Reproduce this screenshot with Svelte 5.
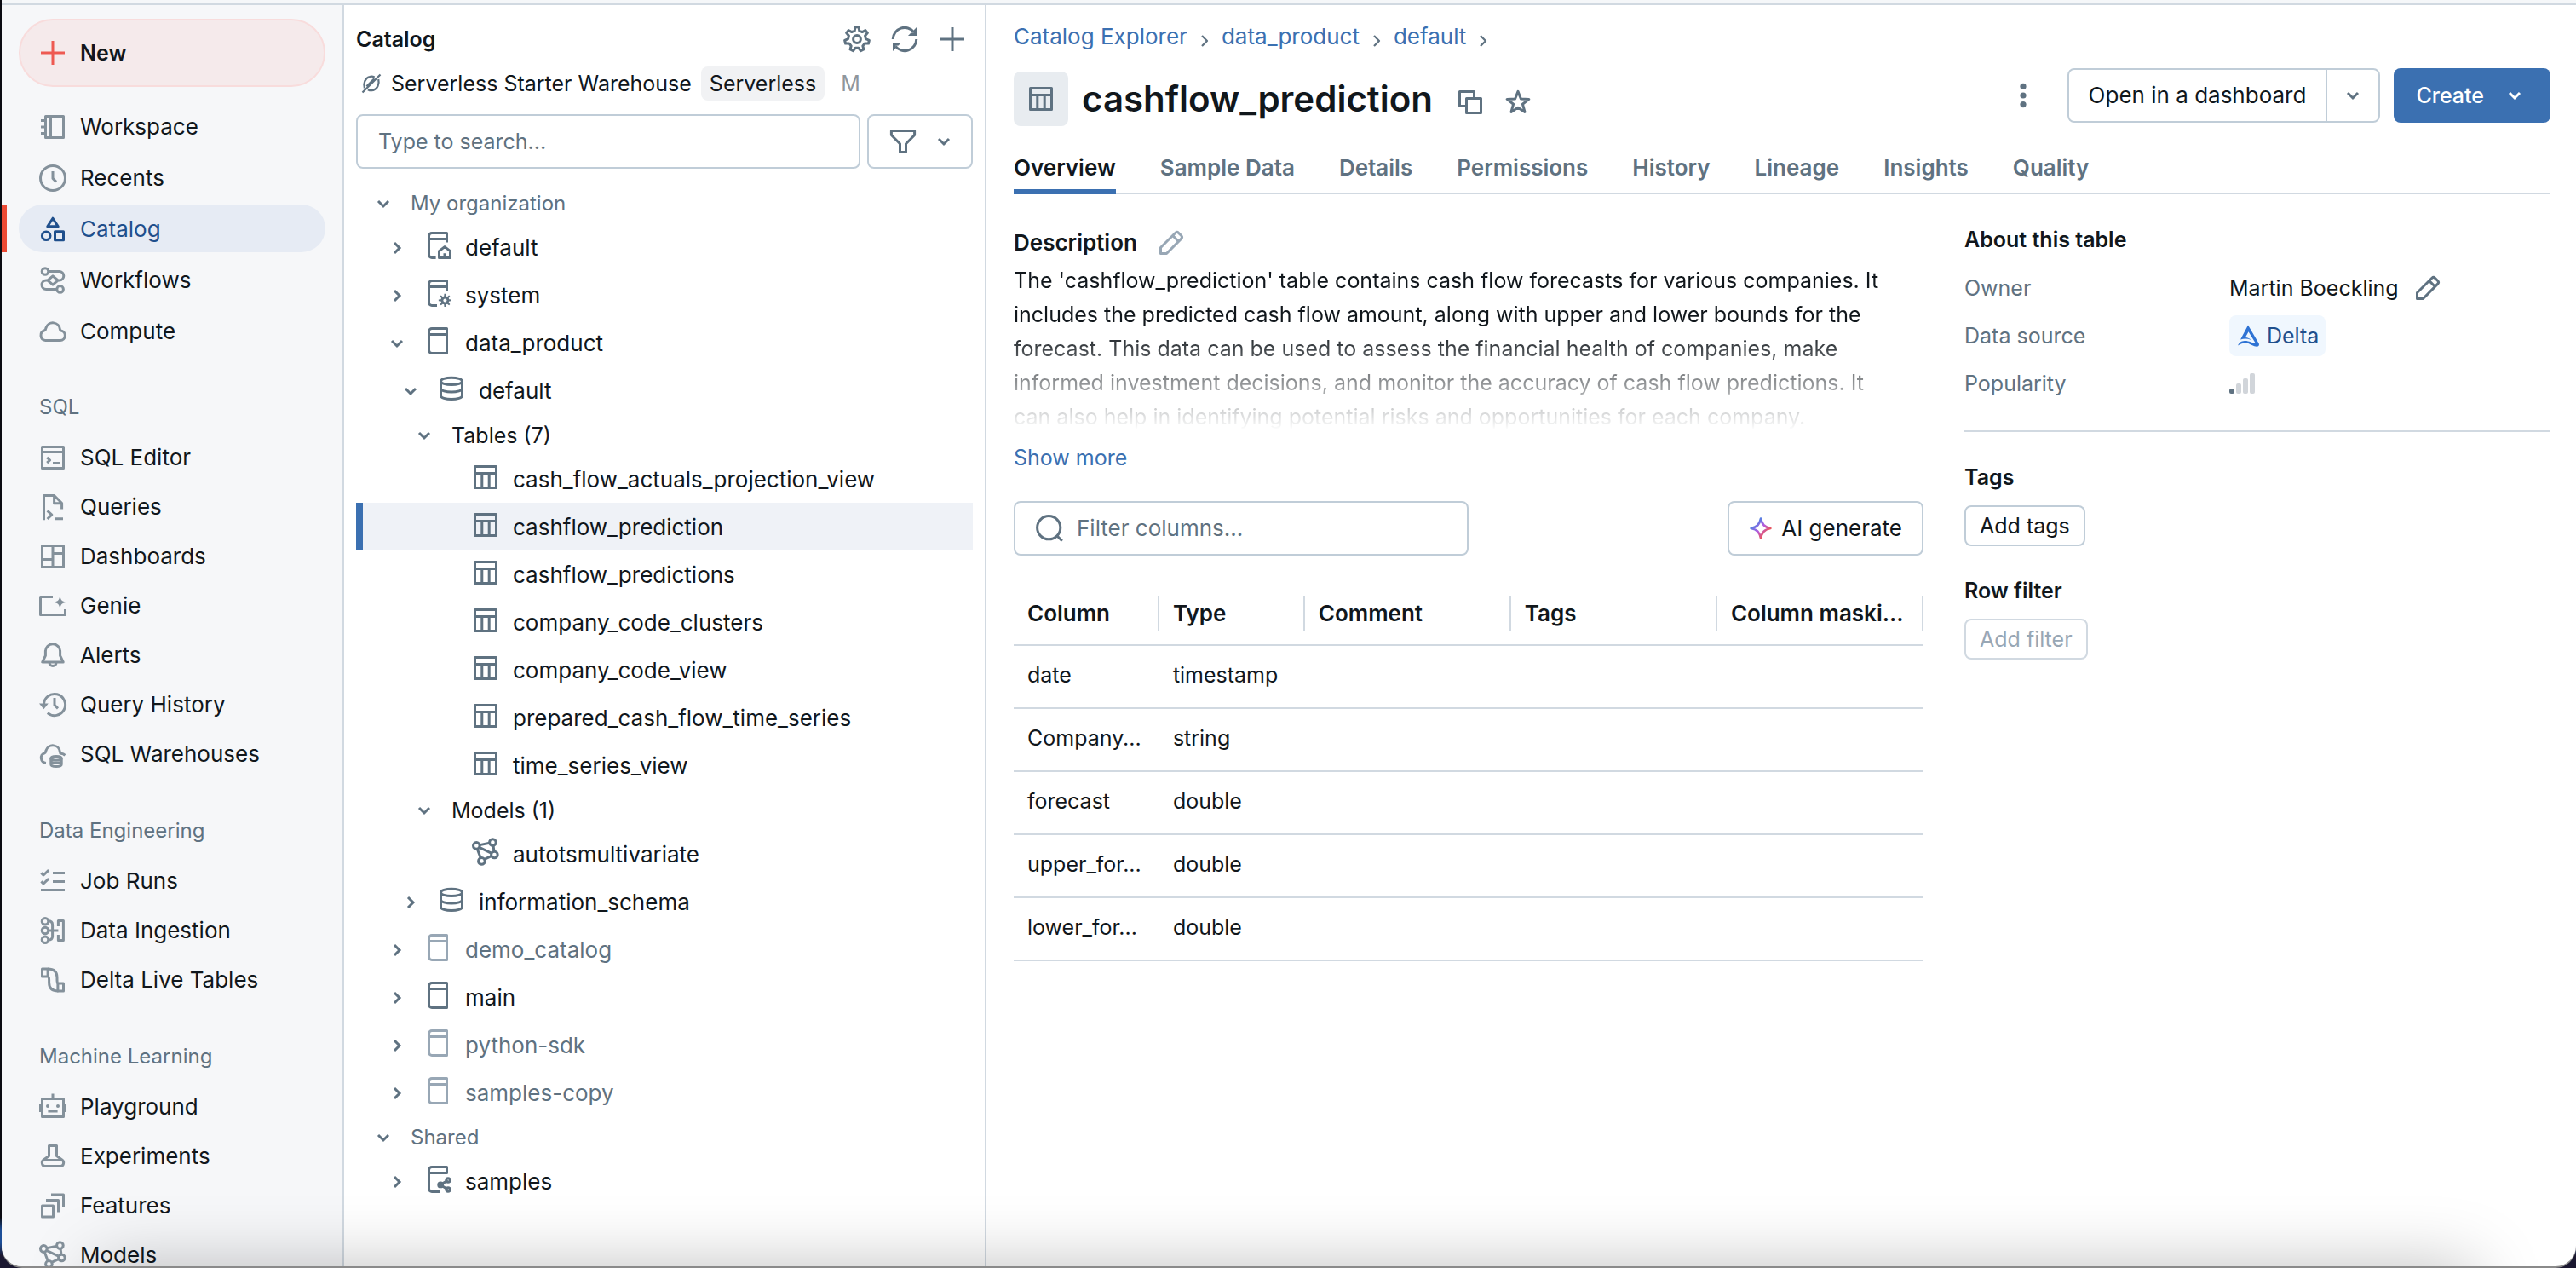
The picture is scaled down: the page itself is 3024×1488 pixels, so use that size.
<script>
  const gearPath = (cx, cy, teeth, outer, inner) => {
    const points = [];
    const step = (Math.PI * 2) / teeth;
    for (let i = 0; i < teeth; i++) {
      const a = i * step - Math.PI / 2;
      for (const [offset, r] of [[-0.3, inner], [-0.15, outer], [0.15, outer], [0.3, inner]]) {
        const t = a + offset * step;
        points.push(`${(cx + r * Math.cos(t)).toFixed(2)} ${(cy + r * Math.sin(t)).toFixed(2)}`);
      }
    }
    return `M${points.join('L')}z`;
  };

  const icons = {
    plus: '<path d="M8 1v14M1 8h14"/>',
    notebook: '<rect x="3.75" y="1.75" width="10.5" height="12.5"/><path d="M6.75 1.75v12.5M1 4.25h2.5M1 8h2.5M1 11.75h2.5"/>',
    clock: '<circle cx="8" cy="8" r="7.25"/><path d="M8 4v4.2l2 2"/>',
    catalog: '<path d="M8 1.6L11.1 6.4H4.9z"/><circle cx="4.1" cy="11.9" r="2.4"/><rect x="9.25" y="9.4" width="5" height="5"/>',
    workflow: '<circle cx="3.5" cy="2.75" r="1.9"/><circle cx="12.3" cy="13.2" r="1.9"/><path d="M5.4 2.75h6.4a2.6 2.6 0 0 1 0 5.2h-1M10.4 13.2H4.1a2.6 2.6 0 0 1 0-5.2h1M8 5.4l3 2.6-3 2.6L5 8z"/>',
    cloud: '<path d="M3.7 13.25h8.7a2.9 2.9 0 0 0 .4-5.75.8.8 0 0 1-.6-.8A4.2 4.2 0 0 0 4 5.9c-.1.7-.3 1.2-.9 1.5a3 3 0 0 0 .6 5.85z"/>',
    editor: '<rect x="1.75" y="1.75" width="12.5" height="12.5"/><path d="M1.75 4.75h12.5M4.6 7.9l1.7 1.6-1.7 1.6M8 11.25h4"/>',
    query: '<path d="M2.75 15.6V1.25H8.8l4.5 4.5v3.5M8.8 1.25v4.6h4.5M4.8 10.2l2.6 2.4-2.6 2.4M9 14.85h5"/>',
    dashboard: '<rect x="1.75" y="1.75" width="12.5" height="12.5"/><path d="M8 1.75v12.5M1.75 9.75H8M8 6.25h6.25"/>',
    genie: '<path d="M8 2.75H.75v10.5h14.5V10"/><path class="solid" d="M12.2 2c.5 2.6 1 3.3 3.8 3.9-2.8.6-3.3 1.2-3.8 3.8-.5-2.6-1-3.2-3.8-3.8 2.8-.6 3.3-1.3 3.8-3.9z"/>',
    bell: '<path d="M8 1.4a4.3 4.3 0 0 0-4.3 4.3v2.5L1.9 12h12.2l-1.8-3.8V5.7A4.3 4.3 0 0 0 8 1.4zM6 12.2a2 2 0 0 0 4 0"/>',
    history: '<path d="M2.7 8A6.3 6.3 0 1 1 4.9 12.8M9 4v4.2l2 2"/><path class="solid" d="M0 7.3h5.4L2.7 10.6z"/>',
    warehouse: '<path d="M4 13.2a3 3 0 0 1-.9-5.8c.6-.3.8-.8.9-1.5a4.2 4.2 0 0 1 8.2.8c0 .5.3.8.7.9 1 .1 1.7.5 2.3 1.1"/><ellipse cx="10" cy="10.4" rx="3.1" ry="1.2"/><path d="M6.9 10.4v3.6c0 .8 1.4 1.3 3.1 1.3s3.1-.5 3.1-1.3v-3.6M6.9 12.4c.6.6 1.8.9 3.1.9s2.5-.3 3.1-.9"/>',
    jobs: '<path d="M1.2 3.2l1.3 1.3L5.6 1.6M1.2 8.2l1.3 1.3 3.1-2.9M8 3.25h7M8 8.25h7M1 13.25h14"/>',
    ingestion: '<circle cx="3.5" cy="2.6" r="1.9"/><circle cx="3.5" cy="8" r="1.9"/><circle cx="3.5" cy="13.4" r="1.9"/><path d="M5.2 2.4c1.7 0 2.6.7 2.6 2.2v6.8c0 1.5-.9 2.2-2.6 2.2M5.4 8h5.8M11.2 5.5V2.25h3v11.5h-3V10.5"/>',
    pipeline: '<rect x="1.75" y="1.5" width="3.3" height="4.5"/><rect x="10.95" y="10" width="3.3" height="4.5"/><path d="M5 1.5c4 0 5.5 2 5.5 5v1.5c0 1.5.2 2 .8 2M5 6c.6 0 .8.6.8 2v1.5c0 3 1.7 5 5.4 5"/>',
    robot: '<path d="M8 .2v3M.75 6v5M15.25 6v5"/><rect x="1.75" y="3.25" width="12.5" height="10.5"/><path d="M5.2 10.5h5.6"/><circle class="solid" cx="5" cy="7.5" r="1"/><circle class="solid" cx="11" cy="7.5" r="1"/>',
    beaker: '<path d="M5.75 1.75h4.5v6l3.3 2.4c1.4 1.1.8 3.6-.9 3.6h-9.3c-1.7 0-2.3-2.5-.9-3.6l3.3-2.4zM3 10.2h10"/>',
    features: '<rect x="1.75" y="8" width="6.5" height="6.5"/><path d="M4 4.75h7.25v7M7 1.5h7.25V8.5"/>',
    model: '<circle cx="2.65" cy="4.2" r="1.9"/><circle cx="12.2" cy="2.3" r="1.9"/><circle cx="13.2" cy="9.5" r="1.9"/><circle cx="5.7" cy="13.2" r="1.9"/><path d="M4.5 3.8l5.9-1.2M4.3 5.2l7.3 3.5M3.1 6l2 5.4M12.5 4.2l.5 3.4M7.3 12.2l4.3-2"/>',
    gear: `<path d="${gearPath(8, 8, 7, 7.2, 5.2)}"/><circle cx="8" cy="8" r="2.2"/>`,
    refresh: '<path d="M1.1 8a6.9 6.9 0 0 1 12.3-4.2M14.9 8a6.9 6.9 0 0 1-12.3 4.2"/><path class="solid" d="M15 1v5h-5l1.7-1.7 1.6-.2.2-1.6zM1 15v-5h5l-1.7 1.7-1.6.2-.2 1.6z"/>',
    disconnected: '<path d="M2.6 11.6C1.5 8 3 3.6 6.6 2.7c1.4-.4 2.7-.2 3.9.3M13.5 4.6c.9 3.6-.7 7.6-4 8.6-1.5.5-3 .3-4.2-.4M15 1L1 15M10.2 4.2l-6 6"/>',
    funnel: '<path d="M1.2 1.75h13.6v2.5L9.75 9.4v4.85h-3.5V9.4L1.2 4.25z"/>',
    down: '<path d="M4 6l4 4 4-4"/>',
    right: '<path d="M6 4l4 4-4 4"/>',
    book: '<path d="M13.25.75H4.5a1.75 1.75 0 0 0-1.75 1.75v11c0 1 .75 1.75 1.75 1.75h8.75zM3 4.25h10.25"/>',
    bookHome: '<path d="M6.8 15.25H4.5a1.75 1.75 0 0 1-1.75-1.75v-11A1.75 1.75 0 0 1 4.5.75h8.75V6.2M3 4.25h10.25M8.75 15.2v-3.9l3.25-2.5 3.25 2.5v3.9zM12 15v-2.4"/>',
    bookGear: `<path d="M7.5 15.25h-3a1.75 1.75 0 0 1-1.75-1.75v-11A1.75 1.75 0 0 1 4.5.75h8.75V7M3 4.25h10.25"/><path class="solid" d="${gearPath(12.2, 12.2, 8, 3.8, 2.5)}"/><circle class="hole" cx="12.2" cy="12.2" r="1"/>`,
    bookShare: '<path d="M9 15.25H4.5a1.75 1.75 0 0 1-1.75-1.75v-11A1.75 1.75 0 0 1 4.5.75h8.75v3.5H3M13.8 8.6l-4.3 2.6 4.3 2.7"/><circle cx="14" cy="8.5" r="1.1"/><circle cx="9.6" cy="11.2" r="1.2"/><circle cx="14" cy="14" r="1.1"/>',
    schema: '<ellipse cx="8" cy="3.7" rx="6.25" ry="2.1"/><path d="M1.75 3.7v8.6c0 1.1 2.8 2 6.25 2s6.25-.9 6.25-2V3.7M1.75 8c0 1.1 2.8 2 6.25 2s6.25-.9 6.25-2"/>',
    table: '<rect x="1.75" y="1.75" width="12.5" height="12.5"/><path d="M1.75 5.75h12.5M5.9 5.75v8.5M10.1 5.75v8.5"/>',
    copy: '<path d="M5 10.25H1.75v-8.5h8.5V5"/><rect x="5.75" y="5.75" width="8.5" height="8.5"/>',
    star: '<path d="M8 1.7l1.7 4.3 4.7.2-3.7 2.9 1.3 4.6L8 11.1l-4 2.6 1.3-4.6L1.6 6.2 6.3 6z"/>',
    pencil: '<path d="M1.75 14.25v-3.5l8.7-8.6a1.3 1.3 0 0 1 1.8 0l1.6 1.6a1.3 1.3 0 0 1 0 1.8l-8.6 8.7zM8.9 3.8l3.3 3.3"/>',
    kebab: '<circle class="solid" cx="8" cy="2.7" r="1.8"/><circle class="solid" cx="8" cy="8" r="1.8"/><circle class="solid" cx="8" cy="13.3" r="1.8"/>',
    search: '<circle cx="7.6" cy="7.6" r="6.8"/><path d="M12.4 12.4l3 3"/>',
    sparkle: '<path stroke="url(#sparkle-tint)" d="M8 1.5c.9 3.9 2.3 5.6 6.5 6.5-4.2.9-5.6 2.6-6.5 6.5-.9-3.9-2.3-5.6-6.5-6.5C5.7 7.1 7.1 5.4 8 1.5z"/>',
    delta: '<path class="solid" d="M8 .8l7.3 12.5c.4 1-.2 2-1.5 2-2.3 0-3.6-1.3-5.6-2.1-2.2-.8-4.6-.1-7 1.3.6-1.6 2-3 4.5-3.1 3-.1 4.7 1.5 7.3 1.6L8.3 5.3 6.2 9.1c1.7.1 2.9.7 3.9 1.7-2.2-.9-4.6-1-7.2-.3z"/>'
  };

  const sections = [
    { title: '', items: [['Workspace', 'notebook'], ['Recents', 'clock'], ['Catalog', 'catalog'], ['Workflows', 'workflow'], ['Compute', 'cloud']] },
    { title: 'SQL', items: [['SQL Editor', 'editor'], ['Queries', 'query'], ['Dashboards', 'dashboard'], ['Genie', 'genie'], ['Alerts', 'bell'], ['Query History', 'history'], ['SQL Warehouses', 'warehouse']] },
    { title: 'Data Engineering', items: [['Job Runs', 'jobs'], ['Data Ingestion', 'ingestion'], ['Delta Live Tables', 'pipeline']] },
    { title: 'Machine Learning', items: [['Playground', 'robot'], ['Experiments', 'beaker'], ['Features', 'features'], ['Models', 'model']] }
  ];

  const tree = [
    { label: 'My organization', level: 0, chevron: 'down', kind: 'group' },
    { label: 'default', level: 1, chevron: 'right', icon: 'bookHome' },
    { label: 'system', level: 1, chevron: 'right', icon: 'bookGear' },
    { label: 'data_product', level: 1, chevron: 'down', icon: 'book' },
    { label: 'default', level: 2, chevron: 'down', icon: 'schema' },
    { label: 'Tables (7)', level: 3, chevron: 'down', kind: 'folder' },
    { label: 'cash_flow_actuals_projection_view', level: 4, icon: 'table' },
    { label: 'cashflow_prediction', level: 4, icon: 'table', selected: true },
    { label: 'cashflow_predictions', level: 4, icon: 'table' },
    { label: 'company_code_clusters', level: 4, icon: 'table' },
    { label: 'company_code_view', level: 4, icon: 'table' },
    { label: 'prepared_cash_flow_time_series', level: 4, icon: 'table' },
    { label: 'time_series_view', level: 4, icon: 'table' },
    { label: 'Models (1)', level: 3, chevron: 'down', kind: 'folder' },
    { label: 'autotsmultivariate', level: 4, icon: 'model' },
    { label: 'information_schema', level: 2, chevron: 'right', icon: 'schema' },
    { label: 'demo_catalog', level: 1, chevron: 'right', icon: 'book', kind: 'muted' },
    { label: 'main', level: 1, chevron: 'right', icon: 'book' },
    { label: 'python-sdk', level: 1, chevron: 'right', icon: 'book', kind: 'muted' },
    { label: 'samples-copy', level: 1, chevron: 'right', icon: 'book', kind: 'muted' },
    { label: 'Shared', level: 0, chevron: 'down', kind: 'group' },
    { label: 'samples', level: 1, chevron: 'right', icon: 'bookShare' }
  ];

  const crumbs = ['Catalog Explorer', 'data_product', 'default'];
  const tabs = ['Overview', 'Sample Data', 'Details', 'Permissions', 'History', 'Lineage', 'Insights', 'Quality'];
  const headings = ['Column', 'Type', 'Comment', 'Tags', 'Column maski...'];
  const columns = [
    ['date', 'timestamp'],
    ['Company...', 'string'],
    ['forecast', 'double'],
    ['upper_for...', 'double'],
    ['lower_for...', 'double']
  ];
</script>

{#snippet icon(name, extra = '')}
  <svg class="icon {extra}" viewBox="0 0 16 16" aria-hidden="true">{@html icons[name]}</svg>
{/snippet}

<div class="desktop">
  <div class="window">
    <div class="topstrip"></div>
    <div class="shell">
      <nav class="sidebar" aria-label="Main">
        <button class="new">{@render icon('plus')}New</button>
        {#each sections as section}
          <div class="section" class:compact={section.title}>
            {#if section.title}<h2>{section.title}</h2>{/if}
            {#each section.items as [label, name]}
              <a href="#{name}" class="nav" class:active={label === 'Catalog'}>{@render icon(name)}{label}</a>
            {/each}
          </div>
        {/each}
      </nav>

      <aside class="browser" aria-label="Catalog browser">
        <header class="browser-head">
          <h2>Catalog</h2>
          <button class="bare" aria-label="Settings">{@render icon('gear')}</button>
          <button class="bare" aria-label="Refresh">{@render icon('refresh')}</button>
          <button class="bare" aria-label="Add">{@render icon('plus')}</button>
        </header>
        <div class="compute">
          {@render icon('disconnected', 'small')}
          <span class="compute-name">Serverless Starter Warehouse</span>
          <span class="badge">Serverless</span>
          <span class="size">M</span>
        </div>
        <div class="finder">
          <input type="text" placeholder="Type to search..." aria-label="Type to search" />
          <button aria-label="Filter">{@render icon('funnel')}{@render icon('down', 'chevron')}</button>
        </div>
        <ul class="tree">
          {#each tree as row}
            <li>
              <button class="row level{row.level} {row.kind ?? ''}" class:selected={row.selected}>
                {#if row.chevron}{@render icon(row.chevron, 'chevron')}{/if}
                {#if row.icon}{@render icon(row.icon, 'glyph')}{/if}
                <span>{row.label}</span>
              </button>
            </li>
          {/each}
        </ul>
      </aside>

      <main>
        <nav class="crumbs" aria-label="Breadcrumb">
          {#each crumbs as crumb}
            <a href="#{crumb}">{crumb}</a>{@render icon('right', 'separator')}
          {/each}
        </nav>

        <div class="title-row">
          <span class="tile">{@render icon('table')}</span>
          <h1>cashflow_prediction</h1>
          <button class="bare" aria-label="Copy name">{@render icon('copy')}</button>
          <button class="bare" aria-label="Favorite">{@render icon('star')}</button>
          <div class="actions">
            <button class="bare" aria-label="More actions">{@render icon('kebab')}</button>
            <div class="split">
              <button>Open in a dashboard</button>
              <button aria-label="More ways to open">{@render icon('down', 'chevron')}</button>
            </div>
            <button class="create">Create{@render icon('down', 'chevron')}</button>
          </div>
        </div>

        <div class="tabs" role="tablist">
          {#each tabs as tab, i}
            <button role="tab" aria-selected={i === 0}>{tab}</button>
          {/each}
        </div>

        <div class="columns">
          <section class="overview">
            <div class="heading">
              <h3>Description</h3>
              <button class="bare faint" aria-label="Edit description">{@render icon('pencil')}</button>
            </div>
            <p>
              The 'cashflow_prediction' table contains cash flow forecasts for various companies. It
              includes the predicted cash flow amount, along with upper and lower bounds for the
              forecast. This data can be used to assess the financial health of companies, make
              informed investment decisions, and monitor the accuracy of cash flow predictions. It
              can also help in identifying potential risks and opportunities for each company.
            </p>
            <button class="link">Show more</button>
            <div class="toolbar">
              <label class="filter">
                {@render icon('search')}
                <input type="text" placeholder="Filter columns..." aria-label="Filter columns" />
              </label>
              <button class="generate">
                <svg class="defs" aria-hidden="true">
                  <linearGradient id="sparkle-tint" x1="0" y1="0" x2="1" y2="1">
                    <stop offset="20%" stop-color="#4a83e2" />
                    <stop offset="50%" stop-color="#b45be0" />
                    <stop offset="80%" stop-color="#f0554f" />
                  </linearGradient>
                </svg>
                {@render icon('sparkle')}AI generate
              </button>
            </div>
            <table>
              <colgroup><col class="narrow" /><col class="narrow" /><col /><col /><col /></colgroup>
              <thead>
                <tr>{#each headings as heading}<th scope="col"><div>{heading}</div></th>{/each}</tr>
              </thead>
              <tbody>
                {#each columns as [name, type]}
                  <tr><td>{name}</td><td>{type}</td><td></td><td></td><td></td></tr>
                {/each}
              </tbody>
            </table>
          </section>

          <aside class="about">
            <h3>About this table</h3>
            <dl>
              <div>
                <dt>Owner</dt>
                <dd>Martin Boeckling<button class="bare" aria-label="Edit owner">{@render icon('pencil')}</button></dd>
              </div>
              <div>
                <dt>Data source</dt>
                <dd><span class="delta">{@render icon('delta')}Delta</span></dd>
              </div>
              <div>
                <dt>Popularity</dt>
                <dd><span class="bars" role="img" aria-label="Low"><i></i><i></i><i></i><i></i></span></dd>
              </div>
            </dl>
            <h3>Tags</h3>
            <button class="chip">Add tags</button>
            <h3>Row filter</h3>
            <button class="chip" disabled>Add filter</button>
          </aside>
        </div>
      </main>
    </div>
    <div class="dock-shade"></div>
  </div>
</div>

<style>
  :global(body) {
    margin: 0;
  }

  .desktop {
    --ink: #11171c;
    --muted: #5f7281;
    --faint: #98a7b5;
    --line: #d1d9e1;
    --outline: #c0cdd8;
    --blue: #3b70b1;
    box-sizing: border-box;
    height: 100vh;
    padding: 0 0 2px 2px;
    background: linear-gradient(#0b0b12 96%, #1d4f99 97%, #1d4f99 98%, #1a1730 99%);
    color: var(--ink);
    font: 25px/40px Inter, 'Liberation Sans', sans-serif;
  }
  .desktop :global(*) {
    box-sizing: border-box;
  }
  .window {
    position: relative;
    display: flex;
    flex-direction: column;
    height: 100%;
    overflow: hidden;
    border-radius: 0 0 24px 24px;
    background: #fff;
    box-shadow: 0 2px 0 #8a8a8a;
  }
  .topstrip {
    flex: none;
    height: 6px;
    border-bottom: 2px solid var(--line);
    background: #f5f7f9;
  }
  .shell {
    flex: 1;
    display: flex;
    min-height: 0;
  }
  .dock-shade {
    position: absolute;
    top: 100%;
    left: 110px;
    right: 120px;
    height: 200px;
    box-shadow: 0 0 80px rgb(0 0 0 / 25%);
    pointer-events: none;
  }

  h1, h2, h3, p, ul, dl, dd {
    margin: 0;
    padding: 0;
  }
  h2, h3 {
    font-size: 25px;
    font-weight: 600;
  }
  button, input {
    margin: 0;
    padding: 0;
    border: 0;
    background: none;
    color: inherit;
    font: inherit;
  }
  a {
    color: var(--blue);
    text-decoration: none;
  }

  .icon {
    flex: none;
    display: block;
    width: 32px;
    height: 32px;
    overflow: visible;
    fill: none;
    stroke: currentColor;
    stroke-width: 1.5;
    stroke-linejoin: round;
  }
  .icon :global(.solid) {
    fill: currentColor;
    stroke: none;
  }
  .icon :global(.hole) {
    fill: #fff;
    stroke: none;
  }
  .icon.small {
    width: 24px;
    height: 24px;
  }
  .icon.chevron {
    width: 24px;
    height: 24px;
    stroke-width: 2;
    stroke-linejoin: miter;
    color: var(--muted);
  }
  .bare {
    display: flex;
    color: var(--muted);
  }
  .bare.faint {
    color: var(--faint);
  }

  .sidebar {
    flex: none;
    width: 402px;
    padding: 16px 20px 0;
    overflow: hidden;
    border-right: 2px solid var(--line);
    background: #f6f7f9;
  }
  .new {
    display: flex;
    align-items: center;
    gap: 16px;
    width: 100%;
    height: 80px;
    margin-bottom: 18px;
    padding: 0 22px;
    border: 2px solid #f8dcdc;
    border-radius: 40px;
    background: #f5eaeb;
    font-weight: 600;
  }
  .new .icon {
    color: #ee5a52;
  }
  .section {
    display: flex;
    flex-direction: column;
    gap: 4px;
  }
  .section.compact {
    gap: 0;
    padding-top: 44px;
  }
  .section h2 {
    margin-bottom: 11px;
    padding-left: 24px;
    color: var(--muted);
    font-size: 24px;
    font-weight: 400;
    line-height: 36px;
  }
  .nav {
    display: flex;
    align-items: center;
    gap: 16px;
    height: 56px;
    padding: 2px 24px 0;
    border-radius: 28px;
    color: var(--ink);
    font-size: 26px;
  }
  .compact .nav {
    height: 58px;
  }
  .nav .icon {
    color: #84919b;
  }
  .nav.active {
    position: relative;
    background: #e6ebf4;
    color: #1f4f8c;
  }
  .nav.active .icon {
    color: inherit;
  }
  .nav.active::before {
    content: '';
    position: absolute;
    inset: 0 auto 0 -20px;
    width: 6px;
    background: #eb4a34;
  }

  .browser {
    flex: none;
    width: 754px;
    padding: 20px 14px 0;
    border-right: 2px solid var(--line);
  }
  .browser-head {
    display: flex;
    align-items: center;
    gap: 24px;
    padding-right: 8px;
  }
  .browser-head h2 {
    flex: 1;
  }
  .compute {
    display: flex;
    align-items: center;
    gap: 11px;
    margin: 12px 0 16px;
    padding-left: 6px;
  }
  .compute .icon {
    color: var(--muted);
  }
  .badge {
    padding: 0 10px;
    border-radius: 8px;
    background: #f1f2f4;
  }
  .size {
    margin-left: 8px;
    color: #8f969c;
  }
  .finder {
    display: flex;
    gap: 8px;
  }
  .finder input, .finder button, .filter {
    height: 64px;
    border: 2px solid var(--outline);
    border-radius: 8px;
  }
  .finder input {
    flex: 1;
    min-width: 0;
    padding: 0 24px;
  }
  .finder button {
    display: flex;
    align-items: center;
    gap: 20px;
    width: 124px;
    padding: 0 20px 0 24px;
    color: var(--muted);
  }
  input::placeholder {
    color: var(--muted);
    opacity: 1;
  }

  .tree {
    margin-top: 16px;
    list-style: none;
  }
  .row {
    display: flex;
    align-items: center;
    gap: 16px;
    width: 100%;
    height: 56px;
    padding-top: 2px;
    font-size: 26px;
    text-align: left;
    white-space: nowrap;
  }
  .row .chevron {
    margin-right: 4px;
  }
  .row .glyph {
    margin-bottom: 6px;
    color: var(--muted);
  }
  .row.group, .row.folder {
    height: 48px;
  }
  .row.folder {
    font-size: 25px;
  }
  .row.group, .row.muted {
    color: var(--muted);
  }
  .row.group {
    font-size: 24px;
  }
  .row.muted .glyph {
    color: var(--faint);
  }
  .level0 { padding-left: 20px; }
  .level1 { padding-left: 36px; }
  .level2 { padding-left: 52px; }
  .level3 { padding-left: 68px; }
  .level4 { padding-left: 136px; }
  .row.selected {
    background: #eff2f7;
    box-shadow: inset 8px 0 var(--blue);
  }

  main {
    flex: 1;
    min-width: 0;
    padding: 17px 30px 0 32px;
  }
  .crumbs {
    display: flex;
    align-items: center;
    font-size: 26px;
  }
  .icon.separator {
    width: 24px;
    height: 24px;
    margin: 10px 8px 0;
    color: var(--muted);
  }
  .title-row {
    display: flex;
    align-items: flex-end;
    gap: 16px;
    height: 68px;
    margin-top: 17px;
  }
  .tile {
    display: grid;
    place-items: center;
    width: 64px;
    height: 64px;
    border-radius: 8px;
    background: #e8ecf0;
    color: var(--muted);
  }
  h1 {
    margin-right: 12px;
    font-size: 42px;
    font-weight: 600;
    line-height: 64px;
  }
  .title-row > .bare {
    height: 44px;
    margin-right: 8px;
  }
  .actions {
    display: flex;
    align-items: center;
    align-self: flex-start;
    gap: 16px;
    margin-left: auto;
    font-size: 26px;
  }
  .actions .bare {
    margin-right: 20px;
  }
  .split {
    display: flex;
    height: 64px;
    border: 2px solid var(--outline);
    border-radius: 8px;
  }
  .split button {
    padding: 0 23px;
  }
  .split button + button {
    padding: 0 18px;
    border-left: 2px solid var(--outline);
  }
  .create {
    display: flex;
    align-items: center;
    gap: 24px;
    height: 64px;
    padding: 0 30px 0 26px;
    border-radius: 8px;
    background: var(--blue);
    color: #fff;
    font-size: 25px;
    font-weight: 500;
  }
  .create .icon.chevron {
    color: #fff;
  }

  .tabs {
    display: flex;
    gap: 52px;
    margin-top: 29px;
    border-bottom: 2px solid var(--line);
  }
  .tabs button {
    margin-bottom: -2px;
    padding-bottom: 5px;
    border-bottom: 6px solid transparent;
    color: var(--muted);
    font-size: 26px;
    font-weight: 600;
    white-space: nowrap;
  }
  .tabs button[aria-selected='true'] {
    border-color: var(--blue);
    color: var(--ink);
  }

  .columns {
    display: grid;
    grid-template-columns: minmax(0, 1068fr) minmax(0, 688fr);
    gap: 48px;
  }
  .overview {
    padding-top: 37px;
  }
  .heading {
    display: flex;
    align-items: center;
    gap: 24px;
  }
  .heading h3 {
    font-size: 26px;
  }
  .overview p {
    height: 200px;
    margin-top: 4px;
    padding-right: 28px;
    overflow: hidden;
    mask-image: linear-gradient(#000 38%, transparent 98%);
  }
  .link {
    display: block;
    margin-top: 8px;
    color: var(--blue);
  }
  .toolbar {
    display: flex;
    justify-content: space-between;
    margin-top: 31px;
    font-size: 26px;
  }
  .filter {
    display: flex;
    align-items: center;
    gap: 16px;
    width: 50%;
    padding: 0 24px;
    color: var(--muted);
  }
  .filter input {
    flex: 1;
    min-width: 0;
    color: var(--ink);
  }
  .generate {
    display: flex;
    align-items: center;
    gap: 10px;
    height: 64px;
    padding: 0 23px;
    border: 2px solid var(--outline);
    border-radius: 8px;
  }
  .generate .icon {
    width: 28px;
    height: 28px;
  }
  .defs {
    position: absolute;
    width: 0;
    height: 0;
  }

  table {
    width: 100%;
    margin-top: 32px;
    border-spacing: 0;
    table-layout: fixed;
  }
  .narrow {
    width: 16%;
  }
  th, td {
    height: 74px;
    padding: 0;
    border-bottom: 2px solid var(--line);
    text-align: left;
    white-space: nowrap;
  }
  td {
    padding: 0 16px 4px;
  }
  th div {
    padding: 0 16px;
    border-right: 2px solid var(--line);
    font-size: 26px;
    font-weight: 600;
    line-height: 42px;
  }

  .about {
    padding-top: 33px;
  }
  dl {
    margin: 9px 0 33px;
    padding-bottom: 27px;
    border-bottom: 2px solid var(--line);
  }
  dl div {
    display: grid;
    grid-template-columns: 311px 1fr;
    align-items: center;
    height: 56px;
  }
  dt {
    color: var(--muted);
  }
  dd {
    display: flex;
    align-items: center;
    gap: 18px;
  }
  .delta {
    display: flex;
    align-items: center;
    gap: 8px;
    padding: 4px 8px;
    border-radius: 8px;
    background: #f0f7fe;
    color: #1f4f8c;
  }
  .delta .icon {
    width: 28px;
    height: 28px;
    color: #2f73d4;
  }
  .bars {
    display: flex;
    align-items: flex-end;
    gap: 2px;
    height: 24px;
  }
  .bars i {
    width: 6px;
    height: 100%;
    border-radius: 2px;
    background: #d1d5da;
  }
  .bars i:nth-child(1) {
    height: 25%;
    background: var(--muted);
  }
  .bars i:nth-child(2) {
    height: 50%;
  }
  .bars i:nth-child(3) {
    height: 75%;
  }
  .chip {
    display: block;
    height: 48px;
    margin: 13px 0 32px;
    padding: 0 16px;
    border: 2px solid var(--outline);
    border-radius: 8px;
  }
  .chip:disabled {
    border-color: var(--line);
    color: var(--faint);
  }
</style>
